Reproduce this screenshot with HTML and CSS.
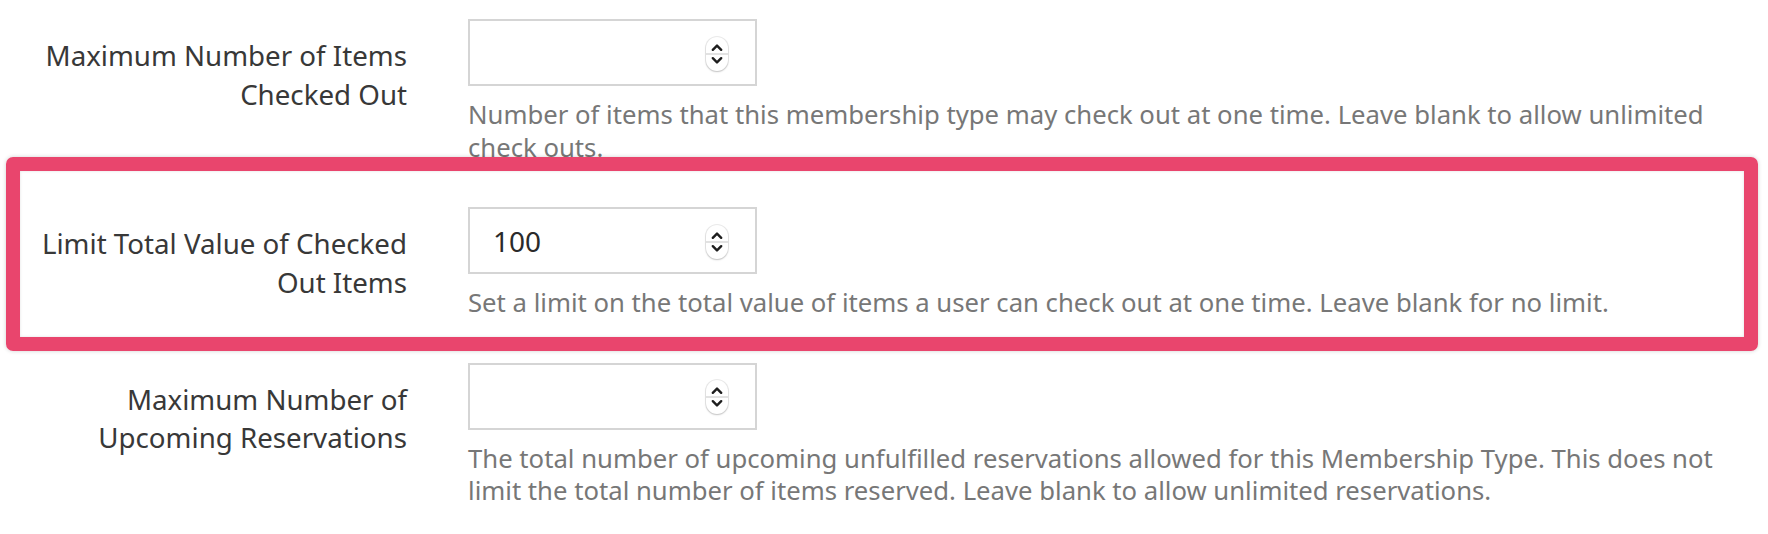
FILE: index.html
```html
<!DOCTYPE html>
<html lang="en">
<head>
<meta charset="utf-8">
<title>Membership type limits</title>
<link rel="stylesheet" href="styles.css">
</head>
<body>
<form class="form">
  <div class="row">
    <label class="label" for="max-items">Maximum Number of Items Checked Out</label>
    <div class="control">
      <div class="field">
        <input class="input" id="max-items" type="text" value="">
        <span class="spinner"><svg viewBox="0 0 22 34" width="22" height="34"><path d="M6.8 12.8 L11 8.6 L15.2 12.8" /><path d="M6.8 21.2 L11 25.4 L15.2 21.2" /></svg></span>
      </div>
      <p class="help">Number of items that this membership type may check out at one time. Leave blank to allow unlimited check outs.</p>
    </div>
  </div>
  <div class="row highlight">
    <label class="label" for="limit-value">Limit Total Value of Checked Out Items</label>
    <div class="control">
      <div class="field">
        <input class="input" id="limit-value" type="text" value="100">
        <span class="spinner"><svg viewBox="0 0 22 34" width="22" height="34"><path d="M6.8 12.8 L11 8.6 L15.2 12.8" /><path d="M6.8 21.2 L11 25.4 L15.2 21.2" /></svg></span>
      </div>
      <p class="help">Set a limit on the total value of items a user can check out at one time. Leave blank for no limit.</p>
    </div>
  </div>
  <div class="row">
    <label class="label" for="max-res">Maximum Number of Upcoming Reservations</label>
    <div class="control">
      <div class="field">
        <input class="input" id="max-res" type="text" value="">
        <span class="spinner"><svg viewBox="0 0 22 34" width="22" height="34"><path d="M6.8 12.8 L11 8.6 L15.2 12.8" /><path d="M6.8 21.2 L11 25.4 L15.2 21.2" /></svg></span>
      </div>
      <p class="help">The total number of upcoming unfulfilled reservations allowed for this Membership Type. This does not limit the total number of items reserved. Leave blank to allow unlimited reservations.</p>
    </div>
  </div>
</form>
</body>
</html>
```
FILE: styles.css
```css
* { box-sizing: border-box; }

html, body {
  margin: 0;
  padding: 0;
  background: #ffffff;
}

body {
  font-family: "Noto Sans", "Open Sans", "Liberation Sans", sans-serif;
  color: #333333;
  overflow: hidden;
}

.form {
  display: flex;
  flex-direction: column;
  gap: 43px;
  padding: 19px 24px 0 0;
}

.row {
  display: grid;
  grid-template-columns: 407px 1fr;
  column-gap: 61px;
  align-items: start;
}

.label {
  padding-top: 17px;
  text-align: right;
  font-size: 27.7px;
  line-height: 38.5px;
  color: #383838;
}

.control {
  display: flex;
  flex-direction: column;
}

.field {
  display: flex;
  align-items: center;
  width: 289px;
  height: 67px;
  border: 2px solid #d5d5d5;
  padding: 0 27px 0 23px;
  background: #ffffff;
}

.input {
  flex: 1;
  min-width: 0;
  border: 0;
  outline: none;
  padding: 0;
  background: transparent;
  font-family: "Noto Sans", "Open Sans", "Liberation Sans", sans-serif;
  font-size: 28px;
  color: #2a2a2a;
}

.spinner {
  display: flex;
  width: 22px;
  height: 34px;
  margin-top: 2px;
  border-radius: 11px;
  background-color: #ffffff;
  background-image: linear-gradient(#e2e2e2, #e2e2e2);
  background-size: 100% 2px;
  background-position: center;
  background-repeat: no-repeat;
  box-shadow: 0 0 0 1px rgba(0, 0, 0, 0.08), 0 1px 2px rgba(0, 0, 0, 0.18);
}

.spinner svg path {
  fill: none;
  stroke: #1e1e1e;
  stroke-width: 2.4;
  stroke-linecap: round;
  stroke-linejoin: round;
}

.help {
  margin: 13px 0 0 0;
  font-size: 25.7px;
  line-height: 32.5px;
  color: #777777;
}

.highlight {
  position: relative;
}

.highlight::before {
  content: "";
  position: absolute;
  top: -50px;
  bottom: -31px;
  left: 6px;
  right: -14px;
  border: 14px solid #e9456d;
  border-radius: 7px;
  box-shadow: 0 0 4px rgba(0, 0, 0, 0.18), inset 0 0 3px rgba(0, 0, 0, 0.12);
  pointer-events: none;
  z-index: 2;
}
```
